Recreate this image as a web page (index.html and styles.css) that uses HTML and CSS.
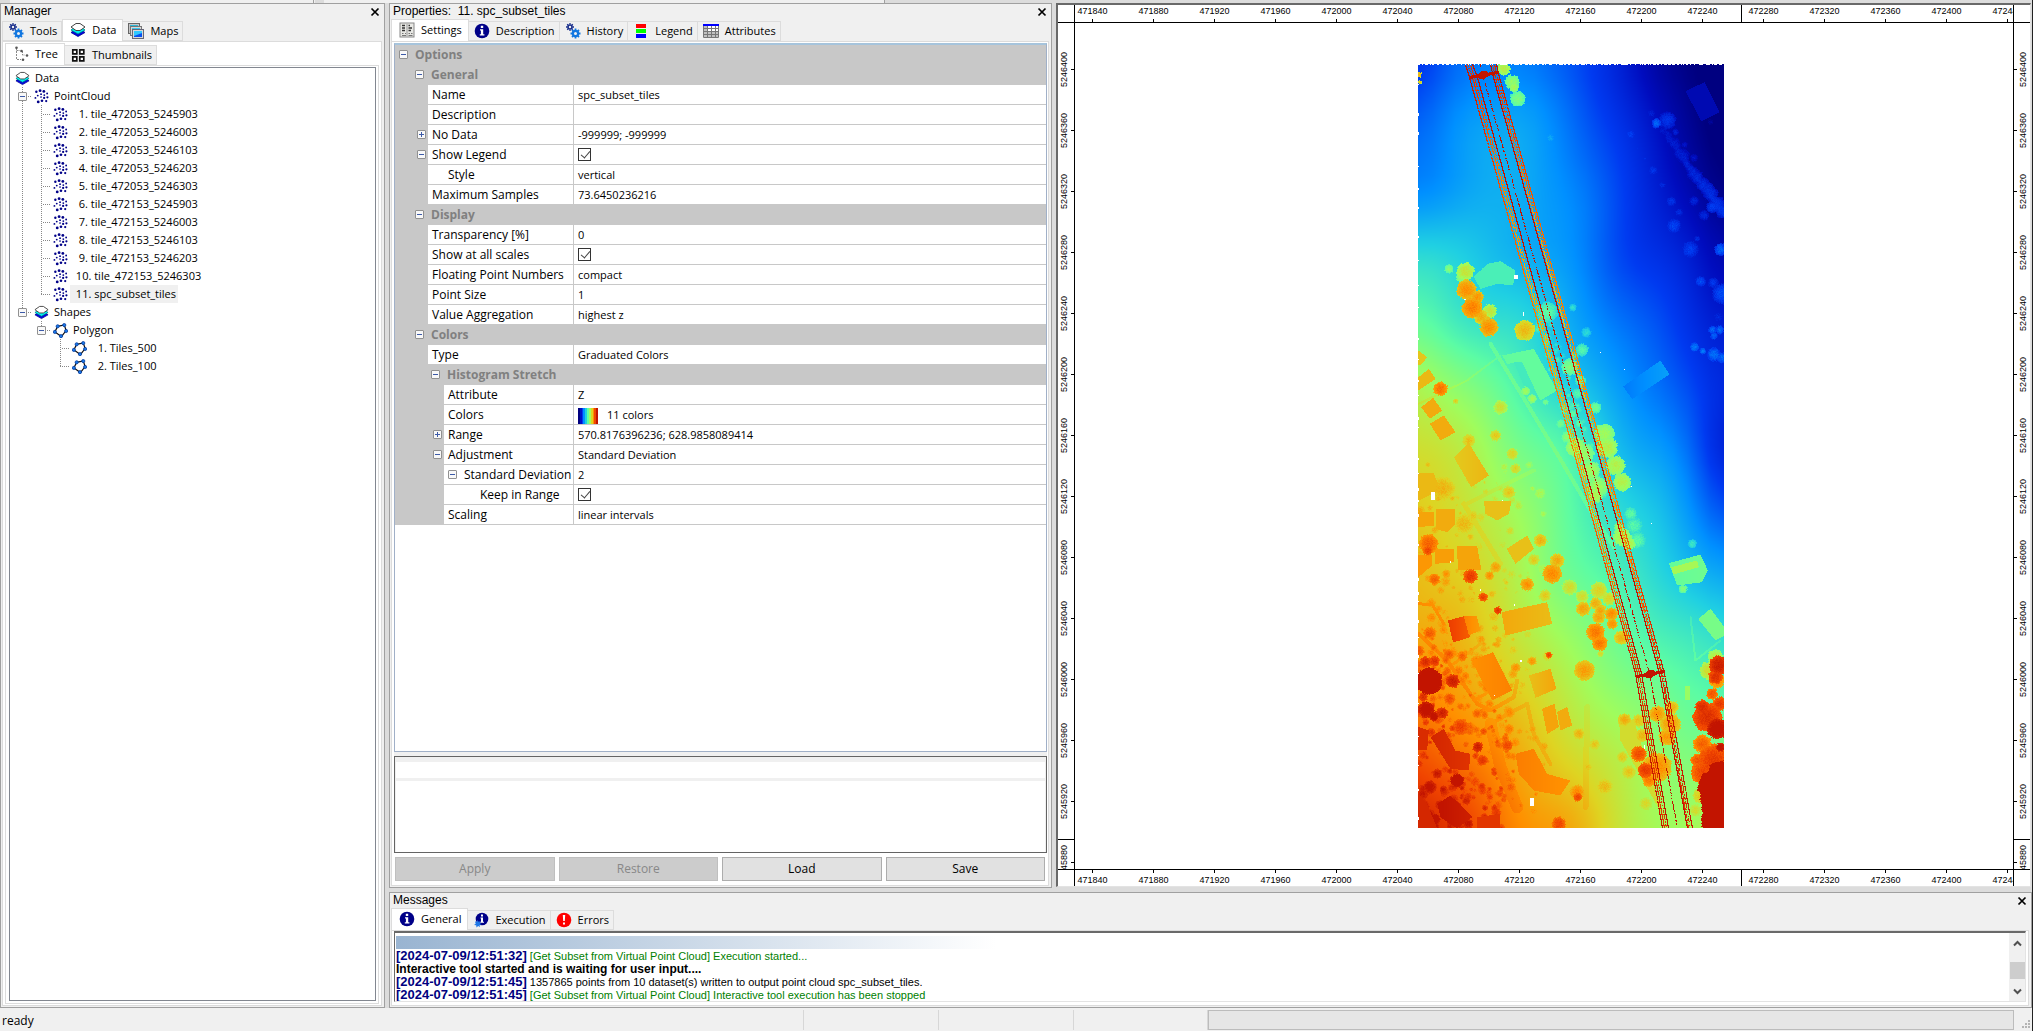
FILE: index.html
```html
<!DOCTYPE html>
<html lang="en">
<head>
<meta charset="utf-8">
<title>SAGA - spc_subset_tiles</title>
<link rel="stylesheet" href="styles.css">
<script src="map.js" defer></script>
</head>
<body>
<svg class="defs" width="0" height="0" aria-hidden="true">
  <symbol id="i-gears" viewBox="0 0 16 16">
    <g fill="none" stroke="#1a2f8c"><circle cx="5" cy="4" r="2" stroke-width="1.6"/><path stroke-width="1.3" d="M5 0v1.5M5 6.500v1.500M1 4h1.500M7.500 4H9M2.200 1.200l1 1M6.800 5.800l1 1M7.800 1.200l-1 1M3.200 5.800l-1 1"/></g>
    <g fill="none" stroke="#1277e0"><circle cx="10.500" cy="10.500" r="2.600" stroke-width="2.200"/><path stroke-width="1.800" d="M10.500 5.500v2M10.500 13.500v2M5.500 10.500h2M13.500 10.500h2M7 7l1.400 1.400M12.600 12.600L14 14M14 7l-1.400 1.400M8.400 12.600L7 14"/></g>
  </symbol>
  <symbol id="i-layers" viewBox="0 0 16 16">
    <path d="M1 10.500l7 4 7-4-2-1.500H3z" fill="#0000e0" stroke="#000090" stroke-width=".8"/>
    <path d="M1 8l7 4 7-4-2-1.500H3z" fill="#00f0f0" stroke="#007a80" stroke-width=".8"/>
    <path d="M1 5l5-3.500h4L15 5l-5 3.500H6z" fill="#fff" stroke="#444" stroke-width="1"/>
  </symbol>
  <symbol id="i-maps" viewBox="0 0 16 16">
    <rect x=".5" y=".5" width="11" height="10" fill="#c8c8c8" stroke="#666"/><rect x="2" y="2" width="8" height="7" fill="#2ab8d8"/>
    <rect x="2.500" y="3.500" width="11" height="9" fill="#d8d8d8" stroke="#777"/><rect x="4" y="5" width="8" height="6" fill="#38c8f0"/>
    <rect x="4.500" y="6.500" width="11" height="9" fill="#d8d8d8" stroke="#667"/><rect x="6" y="8" width="8" height="6" fill="#0a50f0"/><path d="M6 8h8v2L6 13z" fill="#30c8ff"/>
  </symbol>
  <symbol id="i-tree" viewBox="0 0 16 16">
    <path d="M3.500 2v11.500H8M3.500 4.500H7M9.500 5v4H12M9 13.500h1" fill="none" stroke="#888" stroke-dasharray="2 1"/>
    <g fill="#555"><circle cx="3.500" cy="1.800" r="1.300"/><circle cx="8.500" cy="5" r="1.300"/><circle cx="14" cy="9.500" r="1.300"/><circle cx="10" cy="13.800" r="1.300"/></g>
  </symbol>
  <symbol id="i-thumbs" viewBox="0 0 16 16">
    <path d="M2.800 2.800h4v4h-4zM9.800 2.800h4v4h-4zM2.800 9.800h4v4h-4zM9.800 9.800h4v4h-4z" fill="#fff" stroke="#111" stroke-width="1.700"/>
  </symbol>
  <symbol id="i-points" viewBox="0 0 16 16">
    <g fill="#000088"><circle cx="2.500" cy="3" r="1.300"/><circle cx="6.500" cy="1.800" r="1.500"/><circle cx="10.500" cy="2.600" r="1.500"/><circle cx="14" cy="4.800" r="1"/><circle cx="4" cy="7" r="1"/><circle cx="7.500" cy="5.500" r="1"/><circle cx="11" cy="6.500" r="1"/><circle cx="1.500" cy="9.500" r="1"/><circle cx="7.500" cy="8.500" r=".9"/><circle cx="10.800" cy="9.500" r="1.200"/><circle cx="14.300" cy="8.800" r="1.200"/><circle cx="4.500" cy="13.800" r="1.500"/><circle cx="8.500" cy="12.500" r="1.400"/><circle cx="13" cy="12.800" r="1.200"/></g>
  </symbol>
  <symbol id="i-polygon" viewBox="0 0 16 16">
    <path d="M5 3.500L12 2l2 6-5 6.500-7-5z" fill="#fff" stroke="#111" stroke-width="1.300"/>
    <g fill="#1a7ae8" stroke="#00349a" stroke-width=".8"><circle cx="5" cy="3.500" r="1.700"/><circle cx="12" cy="2.200" r="1.700"/><circle cx="14" cy="8.500" r="1.700"/><circle cx="8.500" cy="14" r="1.700"/><circle cx="2" cy="9.500" r="1.700"/></g>
  </symbol>
  <symbol id="i-info" viewBox="0 0 16 16">
    <circle cx="8" cy="8" r="7.300" fill="#000088"/><path d="M6.800 2.800h2.400v2.200H6.800zM6 6.300h3.200v5h1.200v1.300H5.800v-1.300h1.100V7.600H6z" fill="#fff"/>
  </symbol>
  <symbol id="i-exec" viewBox="0 0 16 16">
    <circle cx="9" cy="7" r="6.300" fill="#000088"/><path d="M8 2.500h2v2H8zM7.500 5.500H10v4.300h1v1H7.300v-1H8V6.500h-.5z" fill="#fff"/>
    <path d="M4.500 8l1 1.800 2-.6-.8 1.900 1.800 1-1.900.8.400 2.100-1.900-1-1.600 1.500-.3-2.200-2.200-.2 1.700-1.400L2 9.600l2 .1z" fill="#1f78e8"/>
  </symbol>
  <symbol id="i-error" viewBox="0 0 16 16">
    <circle cx="8" cy="8" r="7.300" fill="#f00"/><path d="M6.800 3h2.400l-.4 6H7.200zM7 10.500h2v2H7z" fill="#fff"/>
  </symbol>
  <symbol id="i-settings" viewBox="0 0 16 16">
    <rect x="1" y="1" width="14" height="14" fill="#e8e8e4" stroke="#888"/>
    <path d="M3 3.500h3M3 6h3M3 8.500h3M9.500 3.500H11M9.500 6H13M9.500 8.500H12" stroke="#333" stroke-width="1.300"/><path d="M8 2v12" stroke="#999"/><path d="M3 11.500h1.500M6 11.500h1M9.500 11.500H11M12 11.500h1.500M3 13.500h4M9.500 13.500h4" stroke="#777"/>
  </symbol>
  <symbol id="i-legend" viewBox="0 0 16 16">
    <path fill="#f00" d="M3 1h10v4H3z"/><path fill="#0f0" d="M3 6h10v4H3z"/><path fill="#00f" d="M3 11h10v4H3z"/>
  </symbol>
  <symbol id="i-attributes" viewBox="0 0 16 16">
    <path fill="#fff" d="M0 1h16v14H0z"/><path fill="#c0c0c0" d="M1 3h3.500v11H1zM5 8h10v6H5z"/>
    <path d="M.5 2v12.500h15V2M.5 5.500h15M.5 8.500h15M.5 11.500h15M4.500 3v11M8.500 3v11M12.500 3v11" fill="none" stroke="#777"/><path fill="#00f" d="M0 1h16v2H0z"/>
  </symbol>
  <symbol id="i-close" viewBox="0 0 10 10"><path d="M1.500 1.500l7 7M8.500 1.500l-7 7" stroke="#000" stroke-width="1.700"/></symbol>
</svg>

<div class="app">
  <div class="toolbar-edge"></div>
  <main class="workspace">
    <section class="pane manager">
      <header class="caption"><h2>Manager</h2><button class="close" aria-label="Close manager"><svg><use href="#i-close"/></svg></button></header>
      <nav class="tabs">
        <button class="tab"><svg><use href="#i-gears"/></svg>Tools</button>
        <button class="tab on"><svg><use href="#i-layers"/></svg>Data</button>
        <button class="tab"><svg><use href="#i-maps"/></svg>Maps</button>
      </nav>
      <div class="page">
        <nav class="tabs">
          <button class="tab on"><svg><use href="#i-tree"/></svg>Tree</button>
          <button class="tab"><svg><use href="#i-thumbs"/></svg>Thumbnails</button>
        </nav>
        <div class="page inner">
          <ul class="tree">
            <li><svg><use href="#i-layers"/></svg><span>Data</span></li>
            <li><i class="g t"><button class="exp" aria-label="Collapse"></button></i><svg><use href="#i-points"/></svg><span>PointCloud</span></li>
            <li><i class="g v"></i><i class="g t"></i><svg><use href="#i-points"/></svg><span>  1. tile_472053_5245903</span></li>
            <li><i class="g v"></i><i class="g t"></i><svg><use href="#i-points"/></svg><span>  2. tile_472053_5246003</span></li>
            <li><i class="g v"></i><i class="g t"></i><svg><use href="#i-points"/></svg><span>  3. tile_472053_5246103</span></li>
            <li><i class="g v"></i><i class="g t"></i><svg><use href="#i-points"/></svg><span>  4. tile_472053_5246203</span></li>
            <li><i class="g v"></i><i class="g t"></i><svg><use href="#i-points"/></svg><span>  5. tile_472053_5246303</span></li>
            <li><i class="g v"></i><i class="g t"></i><svg><use href="#i-points"/></svg><span>  6. tile_472153_5245903</span></li>
            <li><i class="g v"></i><i class="g t"></i><svg><use href="#i-points"/></svg><span>  7. tile_472153_5246003</span></li>
            <li><i class="g v"></i><i class="g t"></i><svg><use href="#i-points"/></svg><span>  8. tile_472153_5246103</span></li>
            <li><i class="g v"></i><i class="g t"></i><svg><use href="#i-points"/></svg><span>  9. tile_472153_5246203</span></li>
            <li><i class="g v"></i><i class="g t"></i><svg><use href="#i-points"/></svg><span> 10. tile_472153_5246303</span></li>
            <li><i class="g v"></i><i class="g l"></i><svg><use href="#i-points"/></svg><span class="sel"> 11. spc_subset_tiles</span></li>
            <li><i class="g l"><button class="exp" aria-label="Collapse"></button></i><svg><use href="#i-layers"/></svg><span>Shapes</span></li>
            <li><i class="g"></i><i class="g l"><button class="exp" aria-label="Collapse"></button></i><svg><use href="#i-polygon"/></svg><span>Polygon</span></li>
            <li><i class="g"></i><i class="g"></i><i class="g t"></i><svg><use href="#i-polygon"/></svg><span>  1. Tiles_500</span></li>
            <li><i class="g"></i><i class="g"></i><i class="g l"></i><svg><use href="#i-polygon"/></svg><span>  2. Tiles_100</span></li>
          </ul>
        </div>
      </div>
    </section>

    <section class="pane properties">
      <header class="caption"><h2>Properties:&nbsp; 11. spc_subset_tiles</h2><button class="close" aria-label="Close properties"><svg><use href="#i-close"/></svg></button></header>
      <nav class="tabs">
        <button class="tab on"><svg><use href="#i-settings"/></svg>Settings</button>
        <button class="tab"><svg><use href="#i-info"/></svg>Description</button>
        <button class="tab"><svg><use href="#i-gears"/></svg>History</button>
        <button class="tab"><svg><use href="#i-legend"/></svg>Legend</button>
        <button class="tab"><svg><use href="#i-attributes"/></svg>Attributes</button>
      </nav>
      <div class="page">
        <div class="grid-box">
          <table class="grid">
            <colgroup><col class="names"><col></colgroup>
            <tbody>
              <tr class="cat"><th colspan="2"><button class="exp" aria-label="Collapse"></button>Options</th></tr>
              <tr class="cat in1"><th colspan="2"><button class="exp" aria-label="Collapse"></button>General</th></tr>
              <tr><th><span>Name</span></th><td>spc_subset_tiles</td></tr>
              <tr><th><span>Description</span></th><td></td></tr>
              <tr><th><button class="exp plus" aria-label="Expand"></button><span>No Data</span></th><td>-999999; -999999</td></tr>
              <tr><th><button class="exp" aria-label="Collapse"></button><span><label for="legend">Show Legend</label></span></th><td><input id="legend" type="checkbox" checked></td></tr>
              <tr><th><span class="sub">Style</span></th><td>vertical</td></tr>
              <tr><th><span>Maximum Samples</span></th><td>73.6450236216</td></tr>
              <tr class="cat in1"><th colspan="2"><button class="exp" aria-label="Collapse"></button>Display</th></tr>
              <tr><th><span>Transparency [%]</span></th><td>0</td></tr>
              <tr><th><span><label for="scales">Show at all scales</label></span></th><td><input id="scales" type="checkbox" checked></td></tr>
              <tr><th><span>Floating Point Numbers</span></th><td>compact</td></tr>
              <tr><th><span>Point Size</span></th><td>1</td></tr>
              <tr><th><span>Value Aggregation</span></th><td>highest z</td></tr>
              <tr class="cat in1"><th colspan="2"><button class="exp" aria-label="Collapse"></button>Colors</th></tr>
              <tr><th><span>Type</span></th><td>Graduated Colors</td></tr>
              <tr class="cat in2"><th colspan="2"><button class="exp" aria-label="Collapse"></button>Histogram Stretch</th></tr>
              <tr class="deep"><th><span>Attribute</span></th><td>Z</td></tr>
              <tr class="deep"><th><span>Colors</span></th><td><i class="ramp"></i>11 colors</td></tr>
              <tr class="deep"><th><button class="exp plus" aria-label="Expand"></button><span>Range</span></th><td>570.8176396236; 628.9858089414</td></tr>
              <tr class="deep"><th><button class="exp" aria-label="Collapse"></button><span>Adjustment</span></th><td>Standard Deviation</td></tr>
              <tr class="deep"><th><span class="nested"><button class="exp" aria-label="Collapse"></button>Standard Deviation</span></th><td>2</td></tr>
              <tr class="deep"><th><span class="sub2"><label for="keep">Keep in Range</label></span></th><td><input id="keep" type="checkbox" checked></td></tr>
              <tr class="deep"><th><span>Scaling</span></th><td>linear intervals</td></tr>
            </tbody>
          </table>
        </div>
        <div class="help"><div class="help-title"></div><div class="help-text"></div></div>
        <div class="actions">
          <button disabled>Apply</button><button disabled>Restore</button><button>Load</button><button>Save</button>
        </div>
      </div>
    </section>

    <section class="map" aria-label="Map">
      <div class="corner tl"></div>
      <ol class="ruler x top"><li>471840</li><li>471880</li><li>471920</li><li>471960</li><li>472000</li><li>472040</li><li>472080</li><li>472120</li><li>472160</li><li>472200</li><li>472240</li><li>472280</li><li>472320</li><li>472360</li><li>472400</li><li>472440</li></ol>
      <div class="corner tr"></div>
      <ol class="ruler y left"><li>5246400</li><li>5246360</li><li>5246320</li><li>5246280</li><li>5246240</li><li>5246200</li><li>5246160</li><li>5246120</li><li>5246080</li><li>5246040</li><li>5246000</li><li>5245960</li><li>5245920</li><li>5245880</li></ol>
      <div class="view"><canvas id="cloud" width="306" height="764"></canvas></div>
      <ol class="ruler y right"><li>5246400</li><li>5246360</li><li>5246320</li><li>5246280</li><li>5246240</li><li>5246200</li><li>5246160</li><li>5246120</li><li>5246080</li><li>5246040</li><li>5246000</li><li>5245960</li><li>5245920</li><li>5245880</li></ol>
      <div class="corner bl"></div>
      <ol class="ruler x bottom"><li>471840</li><li>471880</li><li>471920</li><li>471960</li><li>472000</li><li>472040</li><li>472080</li><li>472120</li><li>472160</li><li>472200</li><li>472240</li><li>472280</li><li>472320</li><li>472360</li><li>472400</li><li>472440</li></ol>
      <div class="corner br"></div>
    </section>

    <section class="pane messages">
      <header class="caption"><h2>Messages</h2><button class="close" aria-label="Close messages"><svg><use href="#i-close"/></svg></button></header>
      <nav class="tabs">
        <button class="tab on"><svg><use href="#i-info"/></svg>General</button>
        <button class="tab"><svg><use href="#i-exec"/></svg>Execution</button>
        <button class="tab"><svg><use href="#i-error"/></svg>Errors</button>
      </nav>
      <div class="page">
        <div class="log-box">
          <div class="log">
            <div class="band"></div>
            <p class="ok"><b>[2024-07-09/12:51:32]</b> [Get Subset from Virtual Point Cloud] Execution started...</p>
            <p class="strong">Interactive tool started and is waiting for user input....</p>
            <p><b>[2024-07-09/12:51:45]</b> 1357865 points from 10 dataset(s) written to output point cloud spc_subset_tiles.</p>
            <p class="ok"><b>[2024-07-09/12:51:45]</b> [Get Subset from Virtual Point Cloud] Interactive tool execution has been stopped</p>
          </div>
          <div class="scroll">
            <button aria-label="Scroll up"><svg viewBox="0 0 9 7"><path d="M1 5.500L4.500 2 8 5.500" fill="none" stroke="#505050" stroke-width="2"/></svg></button>
            <i class="thumb"></i>
            <button aria-label="Scroll down"><svg viewBox="0 0 9 7"><path d="M1 1.500L4.500 5 8 1.500" fill="none" stroke="#505050" stroke-width="2"/></svg></button>
          </div>
        </div>
      </div>
    </section>
  </main>
  <footer class="status">
    <span>ready</span><span></span><span></span><span></span><span class="progress"></span>
    <svg class="grip" viewBox="0 0 9 9"><path fill="#b4b4b4" d="M6 0h2v2H6zM3 3h2v2H3zM6 3h2v2H6zM0 6h2v2H0zM3 6h2v2H3zM6 6h2v2H6z"/></svg>
  </footer>
</div>
</body>
</html>
```
FILE: styles.css
```css
* { box-sizing: border-box; }
body { margin: 0; background: #dcdcdc; color: #000; font: 12px/16px "Open Sans", "Noto Sans", sans-serif; }
h2, p, ul, ol { margin: 0; padding: 0; font: inherit; list-style: none; }
button { font: inherit; color: inherit; margin: 0; padding: 0; border: 0; background: none; }
.defs { position: absolute; }

.app { height: 100vh; display: grid; grid-template-rows: 3px 1fr 23px; border-right: 1px solid #222; }
.toolbar-edge { background: linear-gradient(#dcdcdc, #dcdcdc) 0 0 / 10px 100% no-repeat, linear-gradient(#a0a0a0, #a0a0a0) 313px 0 / 1px 100% no-repeat, linear-gradient(#dcdcdc, #dcdcdc) 315px 0 / 9px 100% no-repeat, linear-gradient(90deg, #f0f0f0 884px, #a0a0a0 884px, #a0a0a0 885px, #dcdcdc 885px); }
.workspace { min-height: 0; display: grid; grid-template: minmax(0, 1fr) 116px / 385px 663px minmax(0, 1fr); gap: 4px; }
.manager { grid-row: 1 / 3; }
.messages { grid-column: 2 / 4; }

.pane { min-width: 0; min-height: 0; display: flex; flex-direction: column; background: #f0f0f0; border: 1px solid #a0a0a0; padding: 0 2px 1px 1px; }
.caption { height: 15px; flex: none; display: flex; justify-content: space-between; align-items: center; padding: 0 2px; font: 12px/15px "Liberation Sans", Arial, sans-serif; }
.close, .close svg { display: block; width: 10px; height: 10px; }

.tabs { flex: none; display: flex; align-items: flex-end; height: 22px; font-size: 11px; }
.tab { display: flex; align-items: center; gap: 6px; height: 20px; padding: 0 4px 0 5px; border: 1px solid #dcdcdc; border-left-width: 0; }
.tab:first-child { border-left-width: 1px; }
.tab svg { width: 16px; height: 16px; }
.tab.on { height: 22px; padding: 0 6px 2px 7px; background: #fff; border: 1px solid #dcdcdc; border-bottom: 0; }
.page { flex: 1; min-height: 0; display: flex; flex-direction: column; background: #fff; border: 1px solid #dcdcdc; padding: 1px; }
.manager > .page { padding: 1px 2px; }
.manager .page .tabs { background: #fff; }
.manager .page .tab:not(.on) { background: #f0f0f0; }
.page.inner { padding: 1px 2px 2px 3px; }

.tree { flex: 1; border: 1px solid #828790; padding: 1px 3px; font-size: 11px; }
.tree li { display: flex; height: 18px; align-items: center; }
.tree svg { width: 15px; height: 15px; margin: 0 2px; flex: none; }
.tree span { white-space: pre; padding: 0 2px 0 3px; line-height: 18px; }
.tree .sel { background: #f0f0f0; }
.g { flex: none; width: 19px; height: 18px; display: flex; align-items: center; justify-content: center; background-repeat: no-repeat; }
.g.v { background: repeating-linear-gradient(#888 0 1px, #fff 1px 2px) 9px 0 / 1px 100% no-repeat; }
.g.t { background: repeating-linear-gradient(#888 0 1px, #fff 1px 2px) 9px 0 / 1px 100% no-repeat, repeating-linear-gradient(90deg, #888 0 1px, #fff 1px 2px) 9px 9px / 10px 1px no-repeat; }
.g.l { background: repeating-linear-gradient(#888 0 1px, #fff 1px 2px) 9px 0 / 1px 9px no-repeat, repeating-linear-gradient(90deg, #888 0 1px, #fff 1px 2px) 9px 9px / 10px 1px no-repeat; }
.exp { flex: none; width: 9px; height: 9px; border: 1px solid #919191; border-radius: 1px; background: linear-gradient(#3c5aa8, #3c5aa8) center / 5px 1px no-repeat #f8f8f8; }
.exp.plus { background: linear-gradient(#3c5aa8, #3c5aa8) center / 5px 1px no-repeat, linear-gradient(#3c5aa8, #3c5aa8) center / 1px 5px no-repeat, #f8f8f8; }

.grid-box { flex: 1; min-height: 0; background: #fff; border: 1px solid #a0b0c8; border-top: 2px solid #a6c4dc; margin: 0 0 0 1px; }
.grid { width: 100%; border-collapse: separate; border-spacing: 0; table-layout: fixed; }
.names { width: 178px; }
.grid tr { height: 20px; }
.grid th, .grid td { height: 20px; padding: 0; font-weight: 400; text-align: left; line-height: 19px; white-space: nowrap; }
.grid td { font-size: 11px; border-left: 1px solid #c8c8c8; border-bottom: 1px solid #c8c8c8; padding-left: 4px; }
.grid th { background: #c8c8c8; border-bottom: 1px solid #c8c8c8; position: relative; }
.grid th > span { display: block; height: 19px; margin-left: 33px; padding-left: 4px; background: #fff; overflow: hidden; }
.grid .deep th > span { margin-left: 49px; }
.grid th > .sub { padding-left: 20px; }
.grid th > .sub2 { padding-left: 36px; }
.grid th > .nested { display: flex; align-items: center; gap: 7px; }
.grid th > .exp { position: absolute; left: 22px; top: 5px; }
.grid .deep th > .exp { left: 38px; }
.grid .cat th { color: #808080; font-weight: 700; padding-left: 20px; }
.grid .cat.in1 th { padding-left: 36px; }
.grid .cat.in2 th { padding-left: 52px; }
.grid .cat th > .exp { left: 4px; }
.grid .cat.in1 th > .exp { left: 20px; }
.grid .cat.in2 th > .exp { left: 36px; }
.grid input { appearance: none; display: block; width: 13px; height: 13px; margin: 0; border: 1px solid #333; background: #fff; }
.grid input:checked::after { content: ""; display: block; width: 4px; height: 8px; margin: 0 0 0 4px; border: solid #444; border-width: 0 1px 1px 0; transform: rotate(40deg); }
.ramp { display: inline-block; vertical-align: middle; width: 20px; height: 16px; margin-right: 9px; background: linear-gradient(90deg, #000080 9%, #0010c4 9% 18%, #003cf5 18% 27%, #0090ff 27% 36%, #20d0e0 36% 45%, #60ffa0 45% 55%, #a0fc5c 55% 64%, #e0d220 64% 73%, #ff9000 73% 82%, #f04800 82% 91%, #c01400 91%); }

.help { flex: none; height: 97px; margin: 4px 0 0 1px; box-shadow: 0 -4px #f0f0f0; border: 1px solid #646464; background: #f0f0f0; padding: 5px 1px 0; display: grid; grid-template-rows: 16px 1fr; gap: 3px; }
.help div { background: #fff; }
.actions { flex: none; display: flex; gap: 4px; padding: 4px 2px 3px; }
.actions button { flex: 1; height: 24px; border: 1px solid #adadad; background: #e1e1e1; }
.actions button:disabled { border-color: #bfbfbf; background: #ccc; color: #888; }

.map { min-width: 0; min-height: 0; position: relative; display: grid; grid-template: 18px minmax(0, 1fr) 16px / 17px minmax(0, 1fr) 16px; background: #fff; margin: 0 1px 1px 0; border: 1px solid #e3e3e3; border-width: 2px 1px 1px 2px; border-top-color: #696969; border-left-color: #696969; font: 9px/11px "Liberation Sans", Arial, sans-serif; }
.view { border: solid #000; border-width: 0 1px 1px 0; display: flex; align-items: center; padding-left: 343px; overflow: hidden; }
.view canvas { display: block; flex: none; }
.corner { border: 0 solid #000; }
.tl { border-width: 0 1px 1px 0; }
.tr { border-bottom-width: 1px; }
.bl { border-right-width: 1px; }
.br { border-left: 0; }
.bl, .br { border-top: 1px solid #000; margin-top: -1px; }
.ruler { display: flex; overflow: hidden; position: relative; }
.ruler li { flex: none; }
.ruler li::after { content: ""; flex: none; background: #000; width: 1px; height: 3px; }
.ruler.x { border-right: 1px solid #000; }
.ruler.x li { width: 61px; display: flex; flex-direction: column; align-items: center; }
.ruler.x li:first-child { margin-left: -13px; }
.ruler.top { border-bottom: 1px solid #000; }
.ruler.top li { justify-content: space-between; padding-top: 1px; }
.ruler.bottom li { flex-direction: column-reverse; justify-content: flex-end; gap: 2px; }
.ruler.y { flex-direction: column; padding-top: 16px; }
.ruler.y li { height: 61px; display: grid; align-items: center; justify-items: center; writing-mode: vertical-rl; transform: rotate(180deg); position: relative; }
.ruler.y li::after { position: absolute; top: 30px; width: 3px; height: 1px; }
.left { border-right: 1px solid #000; }
.left li { padding-left: 3px; }
.left li::after { left: 0; }
.right li { padding-right: 3px; }
.right li::after { right: 0; }
.ruler::after { content: ""; position: absolute; background: #000; }
.ruler.x::after { left: 666px; top: 0; width: 1px; height: 100%; }
.ruler.y::after { top: 816px; left: 0; width: 100%; height: 1px; }

.log-box { flex: 1; min-height: 0; display: flex; margin-left: 1px; border: 1px solid #e3e3e3; border-top: 2px solid #696969; border-left-color: #696969; }
.messages > .page { padding: 0 2px 3px 1px; }
.log { flex: 1; min-width: 0; padding: 3px 0 0 1px; font: 11px/13px "Liberation Sans", Arial, sans-serif; overflow: hidden; }
.band { height: 13px; width: 600px; background: linear-gradient(90deg, #99b4d1, #fff); }
.log b { font-size: 13px; line-height: 13px; color: #000080; }
.log p { height: 13px; white-space: nowrap; }
.log .ok { color: #008000; }
.log .strong { font-weight: 700; font-size: 12px; line-height: 14px; }
.scroll { flex: none; width: 16px; background: #f0f0f0; display: flex; flex-direction: column; align-items: center; padding: 4px 0; }
.scroll button { height: 12px; }
.scroll svg { display: block; width: 9px; height: 7px; }
.thumb { width: 15px; height: 17px; margin: auto 0 6px; background: #cdcdcd; }

.status { background: #f0f0f0; display: grid; grid-template-columns: 804px 135px 135px 134px 1fr 18px; padding-top: 2px; }
.status span { border-right: 1px solid #d7d7d7; padding-left: 2px; line-height: 22px; height: 20px; }
.status .progress { background: #e6e6e6; border: 1px solid #bcbcbc; }
.grip { width: 9px; height: 9px; align-self: end; justify-self: end; margin: 0 1px 2px 0; }
```
FILE: map.js
```js
// Renders the point cloud: ground surface, buildings, trees and the power line,
// all as heights (0..10) that are coloured with the graduated palette.
const W = 306, H = 764;
const PAL = [[0,0,128],[0,12,190],[0,58,240],[0,144,255],[32,208,226],[92,252,164],[160,252,92],[222,212,34],[255,144,0],[240,68,0],[194,20,0]];
const GROUND = [
  [1.8,2.7,2.9,2.2,1.5,0.1,-0.3],
  [2.4,3.4,3.4,2.7,1.8,0.7,-0.3],
  [2.9,3.3,3.5,3.0,2.0,1.2,-0.1],
  [4.3,3.9,3.5,3.0,2.1,1.6,0.7],
  [5.0,4.4,4.2,3.4,2.6,2.0,1.3],
  [6.3,5.5,4.7,3.9,3.0,2.5,1.5],
  [6.8,6.3,5.4,4.8,3.6,3.0,1.3],
  [7.1,6.7,5.9,5.0,4.2,3.5,2.2],
  [7.4,7.0,6.2,5.2,4.6,4.0,3.2],
  [7.7,7.3,6.6,5.8,5.2,4.6,4.3],
  [8.1,7.8,7.1,6.4,5.8,5.2,5.0],
  [9.0,8.4,7.6,7.0,6.3,5.7,5.6],
  [9.8,9.0,8.1,7.7,6.6,5.9,6.2]
];
const z = new Float32Array(W * H);
let seed = 7;
const rnd = () => (seed = (seed * 16807) % 2147483647) / 2147483647;
function cell(x, y) {
  const gx = Math.max(0, Math.min(5.999, x / 51)), gy = Math.max(0, Math.min(11.999, y / 63.7));
  const i = Math.floor(gx), j = Math.floor(gy), a = gx - i, b = gy - j;
  const top = GROUND[j][i] * (1 - a) + GROUND[j][i + 1] * a;
  const bot = GROUND[j + 1][i] * (1 - a) + GROUND[j + 1][i + 1] * a;
  return top * (1 - b) + bot * b;
}
function ground(x, y) {
  let s = 0;
  for (let a = -1; a <= 1; a++) for (let b = -1; b <= 1; b++) s += cell(x + a * 14, y + b * 16);
  return s / 9 + 0.05 * Math.sin(x / 19 + y / 31);
}
for (let y = 0; y < H; y++) for (let x = 0; x < W; x++) z[y * W + x] = ground(x, y);

function tree(x, y, r, h) {
  const p = rnd() * 6, k = 5 + Math.floor(rnd() * 4);
  for (let j = Math.floor(y - r - 1); j <= y + r + 1; j++) for (let i = Math.floor(x - r - 1); i <= x + r + 1; i++) {
    if (i < 0 || j < 0 || i >= W || j >= H) continue;
    const d = Math.hypot(i - x, j - y), t = Math.atan2(j - y, i - x);
    const e = r * (0.96 + 0.04 * Math.sin(k * t + p)) + (rnd() - 0.5) * 1.4;
    if (d < e) z[j * W + i] = Math.max(z[j * W + i], h - 0.8 * (d / r) * (d / r) + (rnd() - 0.5) * 0.35);
  }
}
function poly(pts, h, slope = 0) {
  const xs = pts.map(p => p[0]), x0 = Math.min(...xs), x1 = Math.max(...xs);
  for (let j = 0; j < H; j++) for (let i = Math.max(0, Math.floor(x0)); i < Math.min(W, x1); i++) {
    let inside = false;
    for (let a = 0, b = pts.length - 1; a < pts.length; b = a++) {
      const [xa, ya] = pts[a], [xb, yb] = pts[b];
      if ((ya > j) !== (yb > j) && i < (xb - xa) * (j - ya) / (yb - ya) + xa) inside = !inside;
    }
    if (inside) z[j * W + i] = h + slope * ((i - x0) / (x1 - x0) - 0.5);
  }
}
function line(x0, y0, x1, y1, h, sag = 0, gap = 0) {
  const n = Math.ceil(Math.abs(y1 - y0) + Math.abs(x1 - x0));
  for (let s = 0; s <= n; s++) {
    const t = s / n;
    if (rnd() < gap) continue;
    const x = Math.round(x0 + (x1 - x0) * t), y = Math.round(y0 + (y1 - y0) * t);
    if (x >= 0 && x < W && y >= 0 && y < H) z[y * W + x] = h - sag * 4 * t * (1 - t) + (rnd() - 0.5) * 0.3;
  }
}
function raise(pts, w, dh) {
  for (let s = 1; s < pts.length; s++) {
    const [x0, y0] = pts[s - 1], [x1, y1] = pts[s], L = Math.hypot(x1 - x0, y1 - y0);
    for (let j = Math.max(0, Math.floor(Math.min(y0, y1) - w)); j < Math.min(H, Math.max(y0, y1) + w); j++)
      for (let i = Math.max(0, Math.floor(Math.min(x0, x1) - w)); i < Math.min(W, Math.max(x0, x1) + w); i++) {
        const t = Math.max(0, Math.min(1, ((i - x0) * (x1 - x0) + (j - y0) * (y1 - y0)) / (L * L)));
        if (Math.hypot(i - x0 - t * (x1 - x0), j - y0 - t * (y1 - y0)) < w / 2) z[j * W + i] = ground(i, j) + dh;
      }
  }
}
const N = (x, y) => [(x - 54) / 3, (y - 42) / 3];
const S = (x, y) => [(x - 54) / 3, (y + 1128) / 3];
const at = (f, l) => l.forEach(([x, y, r, h]) => tree(...f(x, y), r / 3, h));
const block = (f, l, h, s) => poly(l.map(p => f(...p)), h, s);

// gardens and paths
raise([N(270,880), N(380,1060), N(470,1210), S(570,210), S(640,320)], 4, 0.4);
raise([N(54,1060), N(200,990), N(300,915)], 2, 0.3);
raise([S(190,190), S(300,370)], 5, 0.3);
raise([S(200,190), S(400,90)], 4, 0.25);
raise([S(54,580), S(140,660), S(230,790), S(270,810), S(340,770), S(350,720)], 4, 0.45);
raise([S(54,490), S(95,492), S(130,550)], 3, 0.6);
raise([S(270,850), S(380,790), S(400,880), S(450,970)], 4, 0.35);
raise([S(270,850), S(300,980), S(350,1100)], 12, 0.25);
raise([S(220,780), S(290,740)], 3, 0.4); raise([S(160,670), S(240,610)], 3, 0.3);
raise([S(560,800), S(555,1100)], 6, 0.25);
raise([S(870,530), S(885,660), S(960,600)], 2, 0.3);
block(S, [[655,830],[700,840],[790,1130],[750,1060],[660,900]], 6.8);

// low hedges scattered through the village and along the tracks
for (let i = 0; i < 240; i++) {
  const x = rnd() * 95, y = 560 + rnd() * 204;
  tree(x, y, 2 + rnd() * 4, ground(x, y) + 0.3 + rnd() * 0.8);
}
for (let i = 0; i < 190; i++) {
  const x = rnd() * 130, y = 400 + rnd() * 350;
  tree(x, y, 2 + rnd() * 5, ground(x, y) + 0.15 + rnd() * 0.5);
}
for (let i = 0; i < 90; i++) {
  const t = rnd(), x = 112 + t * 60 + rnd() * 18, y = 245 + t * 190;
  tree(x, y, 2 + rnd() * 3, ground(x, y) + 0.2 + rnd() * 0.6);
}

// buildings
block(N, [[855,122],[912,95],[957,185],[903,213]], 0.8);
block(N, [[668,1008],[780,930],[807,972],[695,1046]], 3.0, .5);
block(N, [[220,680],[260,640],[300,632],[345,660],[338,705],[290,700],[240,715]], 4.7);
block(N, [[305,915],[400,895],[470,1020],[420,1050],[360,935],[320,940]], 5.1);
block(N, [[340,935],[365,935],[400,1010],[380,1030]], 4.6);
block(N, [[54,980],[85,955],[105,985],[54,1020]], 7.4); block(N, [[62,1070],[98,1042],[125,1080],[88,1105]], 7.6);
block(N, [[88,1120],[130,1095],[165,1145],[120,1170]], 7.6); block(N, [[54,900],[80,920],[60,945],[54,945]], 7.2);
block(S, [[160,50],[205,8],[265,105],[212,140]], 7.3, .3);
block(S, [[54,98],[100,98],[120,150],[54,180]], 7.4); block(S, [[106,207],[165,207],[165,250],[140,275],[106,265]], 7.6);
block(S, [[54,216],[100,216],[100,255],[54,260]], 7.7); block(S, [[250,183],[333,183],[325,220],[290,240],[255,220]], 7.3);
block(S, [[318,325],[380,285],[400,325],[345,370]], 7.3); block(S, [[105,327],[160,327],[160,365],[105,370]], 7.8);
block(S, [[170,318],[230,318],[243,390],[172,390]], 7.7); block(S, [[54,345],[95,345],[95,375],[54,410]], 7.9);
block(S, [[142,540],[190,527],[210,590],[158,606]], 8.9, -.5); block(S, [[190,527],[228,525],[240,570],[205,585]], 8, -.4);
block(S, [[303,515],[440,485],[455,550],[315,585]], 7.5, -.3); block(S, [[213,660],[278,635],[335,750],[275,780]], 8.1, .2);
block(S, [[385,705],[450,685],[468,745],[405,772]], 7.5, .4); block(S, [[425,805],[462,790],[475,860],[440,880]], 7.7);
block(S, [[470,815],[500,800],[515,855],[480,870]], 7.6); block(S, [[805,368],[900,342],[922,390],[905,425],[830,435]], 5.2, .2);
block(S, [[812,380],[890,360],[895,380],[818,402]], 6.1); block(S, [[893,535],[930,505],[972,560],[972,585],[945,600]], 5.4);
block(S, [[345,940],[400,925],[440,1000],[510,1020],[480,1065],[400,1050],[355,1000]], 8.1, -.3);
block(S, [[90,890],[130,865],[165,930],[210,940],[205,990],[150,985]], 9.5, -.3);
block(S, [[54,860],[85,870],[80,930],[54,930]], 9.5); block(S, [[110,1090],[150,1065],[215,1130],[170,1164],[120,1130]], 9.9, -.3);
block(S, [[54,1060],[80,1090],[110,1164],[54,1164]], 9.6); block(S, [[230,1130],[300,1120],[300,1164],[230,1164]], 9.3);
block(S, [[855,738],[870,738],[868,780],[855,780]], 5.9);

// dark tree row and isolated trees on the slope
for (let i = 0; i < 34; i++) at(N, [[785 + i * 5.4 + rnd() * 12, 240 + i * 7.6, 10 + rnd() * 14, 1.2 + i * 0.02]]);
at(N, [[752,190,18,1.4],[800,210,28,1.8],[768,218,15,2.5],[690,252,17,2],[825,245,12,1.4],[852,283,11,1.2],[880,322,13,1.2],[757,360,18,1.8],[785,404,15,1.6],[812,453,17,1.8],[880,452,17,1.5],[835,486,14,1.7],[820,526,23,2.1],[910,495,17,1.6],[935,470,18,2],[868,597,28,2],[890,565,10,1.7],[960,597,20,2.4],[900,693,17,2.2],[938,697,18,1.9],[965,730,32,2.2],[952,800,20,1.6],[936,838,14,2.5],[958,838,14,2.5],[940,856,12,2.5],[882,890,15,2.7],[907,902,11,2.7],[940,912,22,2.6],[965,922,18,2.5],[449,262,14,3.4],[712,292,5,1.8],[733,325,5,1.8],[930,215,12,.4],
[310,55,20,6.4],[335,95,22,5.8],[352,145,24,5.5],[340,110,15,6.1],[56,72,9,7.5],[58,95,6,7.3],
[145,655,14,5.6],[195,662,27,6.6],[182,680,16,5.9],[198,718,31,8],[230,740,20,7.9],[215,772,32,8.2],[242,800,22,7.6],[268,782,22,6.6],[265,830,29,8],[372,840,32,7.4],[440,785,32,5],[517,771,12,4.3],[557,846,16,4.2],[545,898,20,4.9],[525,915,12,4.5],[508,950,26,5.5],[120,1015,22,8.4],[375,1022,14,6],[395,1045,14,6],[435,1055,10,5.4],[585,1072,18,5.3],[612,1150,32,6],[620,1190,32,6.3],[540,990,18,5],[530,1030,17,4.9],[300,1070,22,6.7],[285,1155,17,7.2],[165,1052,9,7.1],[205,1170,20,7.3],[480,1120,14,5.4],[500,1160,18,5.7],[525,1190,30,6.2]]);
at(S, [[625,30,24,6.2],[645,75,30,6.3],[665,125,28,6.3],[550,40,32,5.9],[570,90,30,6],[590,140,32,6],[585,165,22,6.2],[690,220,20,5],[700,255,27,4.9],[710,300,27,5],[665,290,28,6.3],[685,310,20,6.3],[655,260,14,6],
[848,445,13,5.6],[875,310,14,4.5],[420,300,20,7.5],[400,358,18,7.1],[470,360,22,7.6],[455,400,30,8.1],[380,432,20,8],[433,465,18,7.2],[508,440,24,6.8],[548,505,22,7.7],[545,468,20,6.8],[595,450,26,7],[625,475,20,7],[585,488,18,7.6],[600,510,18,7.7],[595,530,20,7.7],[633,520,20,8],[585,575,28,8.3],[598,608,24,8.3],[662,592,22,7.5],[635,550,16,8],[552,690,32,7.8],[600,640,10,6.9],[672,838,20,7.6],[715,840,20,7.3],[725,885,20,7.5],[715,940,24,8.9],[735,990,24,9.2],[665,950,18,7.2],[685,995,22,7.2],[770,980,45,8],[770,820,25,7.9],[810,850,32,7.8],[800,890,26,7.9],[815,800,20,7.5],[745,1020,20,8.3],[612,1038,25,7.4],[735,1090,22,6.9],[535,880,18,7.5],[582,912,18,7.2],[530,1055,24,8.1],[532,1070,14,9],[562,980,14,7.3],
[85,310,30,8.6],[82,330,16,9],[125,145,40,7.5],[190,250,34,7.4],[210,408,22,9.2],[102,417,18,8.6],[248,470,14,9.1],[292,510,12,9.3],[285,380,17,7.8],[267,405,14,8],[137,400,14,8],[88,578,20,8.7],[75,665,18,9.5],[102,662,16,9.4],[85,722,42,10.6],[157,722,21,9.8],[78,808,26,10.3],[100,828,14,10.3],[125,818,18,9.8],[147,775,18,8.9],[68,770,14,9.5],[345,682,15,8],[395,662,14,7.9],[445,643,10,9],[232,920,16,9.8],[170,1020,21,10.5],[245,960,17,9.3],[88,1040,20,10.2],[110,1000,16,9.9],[245,1050,16,9.1],[475,1150,22,9],[320,915,18,9],[180,860,26,9.1],[430,918,14,7.8],[325,155,20,7.2],[345,85,16,7],[335,40,18,7],
[955,675,30,9.8],[945,710,22,9.4],[925,690,28,6.8],[945,650,24,6.4],[950,720,24,8.2],[935,760,18,8.8],[958,790,22,9.2],[920,830,45,9.4],[905,800,22,9.5],[950,865,32,10.3],[905,910,28,8.6],[940,960,50,9.2],[960,920,14,10.2],[910,995,40,9],[945,1040,55,10.8],[960,1000,40,10.8],[955,1090,55,10.8],[945,1140,45,10.8],[965,1150,40,10.8],[890,960,20,8.8],[900,1065,24,7.2],[885,1110,20,6.8],[920,1075,22,10.5]]);

// power line: three spans of both cable bundles
const spans = (top, mast1, mast2, bottom, h, sag, gap) => {
  line(top, 0, mast1, 13, h, 0, gap);
  line(mast1, 13, mast2, 609, h, sag, gap);
  line(mast2, 609, bottom, 764, h, 0, gap);
};
spans(47, 51, 217, 244, 9.9, 1.7, .04);
spans(49, 54, 219, 246, 9.3, 1.8, .1);
spans(52, 56, 221, 248, 9.3, 1.7, .35);
spans(54, 59, 223, 250, 10.3, 0, 0);
spans(62, 65, 231, 259, 10.2, 0, .4);
spans(72, 75, 241, 269, 10.3, 0, 0);
spans(74, 77, 243, 270, 9.4, 2.2, .2);
spans(76, 79, 244, 272, 9.5, 1.5, .4);
spans(78, 81, 246, 274, 9.9, 1.8, .04);
for (const [x, y] of [[51, 13], [218, 612]]) {
  for (let k = 0; k < 3; k++) line(x, y + k - 1, x + 28, y + k - 6, 10.5);
  poly([[x + 6, y], [x + 12, y - 6], [x + 18, y - 6], [x + 20, y - 2], [x + 14, y + 2]], 10.5);
}

const c = document.getElementById('cloud').getContext('2d'), img = c.createImageData(W, H);
for (let p = 0; p < W * H; p++) {
  const v = Math.max(0, Math.min(9.999, z[p])), i = Math.floor(v), f = v - i;
  for (let k = 0; k < 3; k++) img.data[p * 4 + k] = PAL[i][k] * (1 - f) + PAL[i + 1][k] * f;
  img.data[p * 4 + 3] = 255;
}
c.putImageData(img, 0, 0);
// cells without returns
c.fillStyle = '#fff';
[[...N(342,676),4,4],[...N(370,785),1,4],[...N(193,748),2,1],[...N(601,907),1,1],[...N(673,957),1,1],[...S(92,155),4,8],[...S(390,1073),4,8],[...S(360,660),2,2],[...S(732,916),1,4],[...S(150,363),1,2],[...S(240,448),1,2],[...S(342,493),1,2],[...S(282,765),1,1],[...S(694,138),1,1],[...S(754,249),1,1],[...S(306,180),1,1]].forEach(r => c.fillRect(...r.map(Math.round)));
for (let y = 20; y < H; y += 9 + Math.floor(rnd() * 26)) c.fillRect(0, y, 1, 1 + Math.floor(rnd() * 3));
for (let x = 0; x < W; x += 2 + Math.floor(rnd() * 4)) c.fillRect(x, 0, 1 + Math.floor(rnd() * 3), 1);
```
